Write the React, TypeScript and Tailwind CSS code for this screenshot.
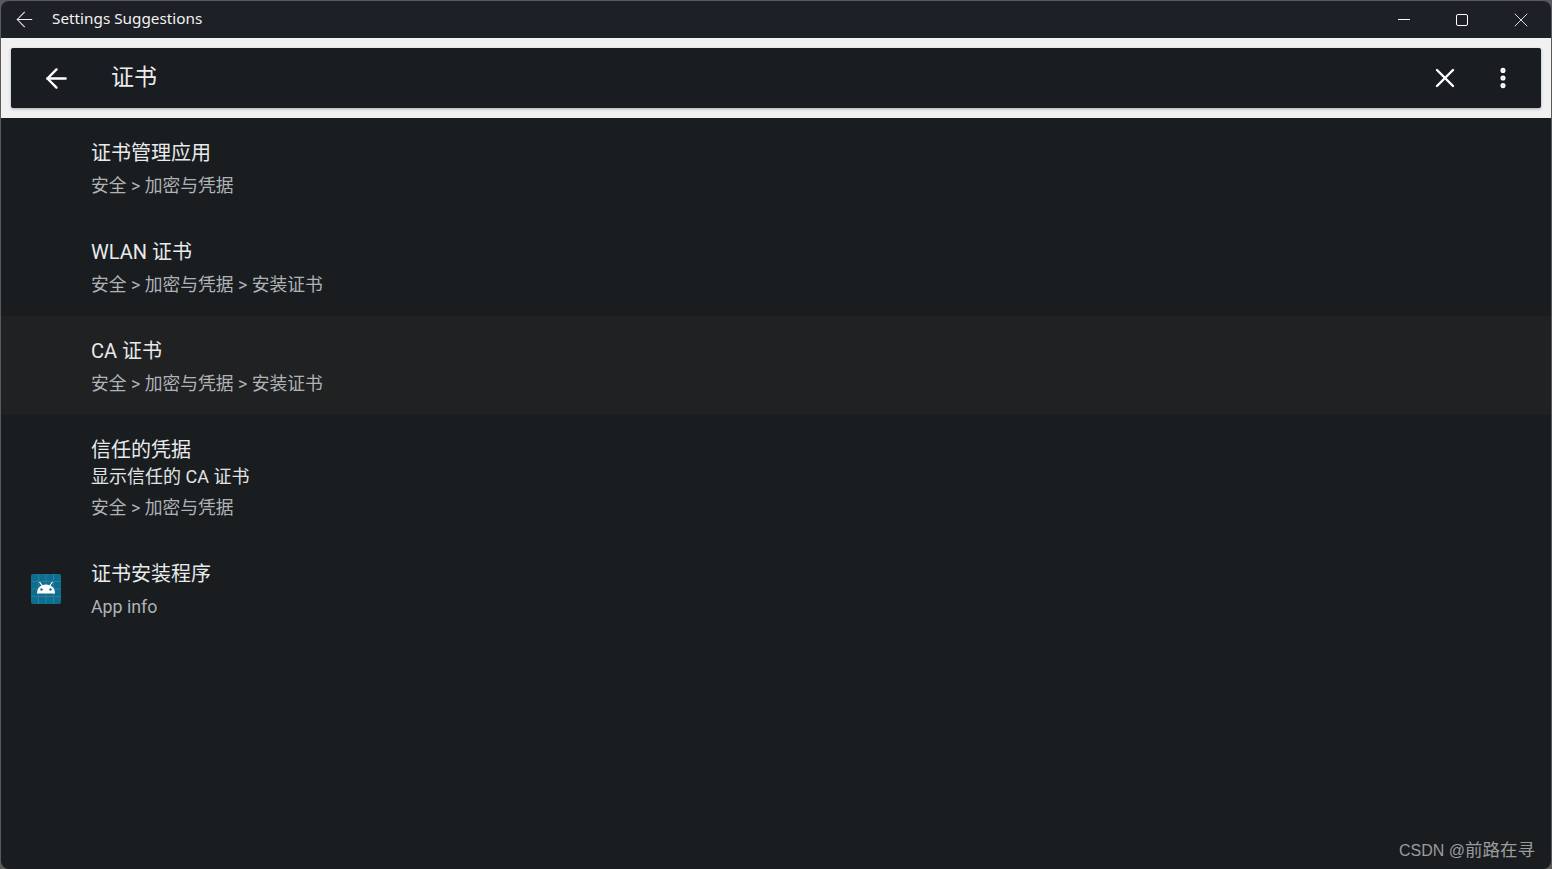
import React from 'react';
import { ArrowLeft, X, MoreVertical } from 'lucide-react';

const FONT = "font-['Roboto','Noto_Sans_CJK_SC',sans-serif]";

interface Row {
  title: string;
  extra?: string;
  sub: string;
  active?: boolean;
  icon?: boolean;
}

const rows: Row[] = [
  { title: '证书管理应用', sub: '安全 > 加密与凭据' },
  { title: 'WLAN 证书', sub: '安全 > 加密与凭据 > 安装证书' },
  { title: 'CA 证书', sub: '安全 > 加密与凭据 > 安装证书', active: true },
  { title: '信任的凭据', extra: '显示信任的 CA 证书', sub: '安全 > 加密与凭据' },
  { title: '证书安装程序', sub: 'App info', icon: true },
];

const AndroidIcon = () => (
  <svg width="30" height="30" viewBox="0 0 30 30" className="block">
    <rect width="30" height="30" rx="2" fill="#0f6d8f" />
    <g stroke="#3f93ad" strokeWidth="1" opacity="0.5">
      <path d="M0 7.500H30M0 15H30M0 22.500H30M7.500 0V30M15 0V30M22.500 0V30" />
    </g>
    <path d="M6 19.500c0-5.500 3.500-9 9-9s9 3.500 9 9z" fill="#fff" />
    <path d="M8.500 8l3 4M21.500 8l-3 4" stroke="#fff" strokeWidth="1.200" />
    <circle cx="10.500" cy="15.500" r="1.200" fill="#0f6d8f" />
    <circle cx="19.500" cy="15.500" r="1.200" fill="#0f6d8f" />
  </svg>
);

const ResultRow = ({ row }: { row: Row }) => (
  <div className={`flex items-center ${row.active ? 'bg-[#1f2123]' : ''} ${row.extra ? 'h-[124px]' : 'h-[99px]'}`}>
    <div className="w-[90px] shrink-0 pl-[30px]">{row.icon && <AndroidIcon />}</div>
    <div className="flex flex-col pt-[2px]">
      <div className="text-[20px] leading-[28px] text-[#e8eaeb]">{row.title}</div>
      {row.extra && <div className="text-[18px] leading-[26px] text-[#e2e4e5]">{row.extra}</div>}
      <div className={`text-[17.8px] leading-[26px] text-[#b0b3b6] ${row.extra ? 'mt-[5px]' : 'mt-[6px]'}`}>{row.sub}</div>
    </div>
  </div>
);

export default function App() {
  return (
    <div className={`relative flex h-[869px] w-[1552px] flex-col overflow-hidden bg-[#5a5a5a] ${FONT}`}>
      <div className="mx-px mt-px flex min-h-0 flex-1 flex-col overflow-hidden rounded-lg">
        <div className="flex h-[37px] shrink-0 items-center bg-[#1e2027] text-[#f2f2f2]">
          <ArrowLeft className="ml-[11px] h-[25px] w-[25px]" strokeWidth={1} />
          <span className="ml-[15px] -translate-y-px font-['Noto_Sans'] text-[15.3px]">Settings Suggestions</span>
          <div className="ml-auto flex items-center">
            <div className="flex w-[59px] justify-center"><div className="h-px w-[12px] bg-white" /></div>
            <div className="flex w-[59px] justify-center"><div className="-translate-x-px h-[12px] w-[12px] rounded-[2px] border border-white" /></div>
            <div className="flex w-[59px] justify-center"><X className="-translate-x-px h-[24px] w-[24px]" strokeWidth={0.9} /></div>
          </div>
        </div>

        <div className="shrink-0 bg-[#f1f1f1] px-[10px] py-[10px]">
          <div className="flex h-[60px] items-center rounded-[2px] bg-[#191c20] text-white shadow-[0_1px_3px_rgba(0,0,0,0.3)]">
            <ArrowLeft className="ml-[30px] h-[31px] w-[31px]" strokeWidth={1.9} />
            <span className="ml-[39px] text-[23px] text-[#eceded]">证书</span>
            <X className="ml-auto h-[32px] w-[32px]" strokeWidth={1.8} />
            <MoreVertical className="ml-[29px] mr-[25px] h-[26px] w-[26px]" strokeWidth={2.7} />
          </div>
        </div>

        <div className="relative min-h-0 flex-1 bg-[#191d20]">
          {rows.map((row) => (
            <ResultRow key={row.title} row={row} />
          ))}
          <div className="absolute bottom-[6px] right-[16px] font-['Liberation_Sans','Noto_Sans_CJK_SC',sans-serif] text-[16px] leading-[24px] text-[#9a9c9e]">
            CSDN @<span className="text-[17.5px]">前路在寻</span>
          </div>
        </div>
      </div>
    </div>
  );
}
